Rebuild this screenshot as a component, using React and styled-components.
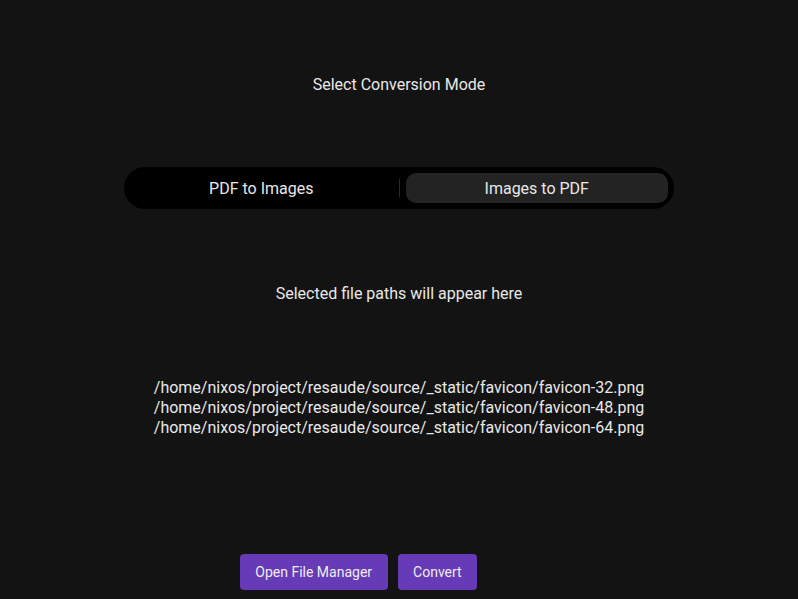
import styled, { createGlobalStyle } from 'styled-components';

const GlobalStyle = createGlobalStyle`
  html, body {
    margin: 0;
    padding: 0;
    background: #131313;
  }
  body {
    font-family: Roboto, "Noto Sans", sans-serif;
    color: #e8e8e8;
  }
`;

const Page = styled.div`
  width: 798px;
  height: 599px;
  display: flex;
  flex-direction: column;
  align-items: center;
  background: #131313;
`;

const Title = styled.div`
  margin-top: 75px;
  font-size: 16px;
  line-height: 20px;
`;

const Segmented = styled.div`
  margin-top: 72px;
  width: 550px;
  height: 42px;
  box-sizing: border-box;
  padding: 6px;
  background: #000;
  border-radius: 21px;
  display: flex;
  align-items: center;
`;

const Segment = styled.div`
  flex: 1;
  height: 30px;
  display: flex;
  align-items: center;
  justify-content: center;
  border-radius: 10px;
  font-size: 16px;
  background: ${(p) => (p.active ? '#232323' : 'transparent')};
  color: #e8e8e8;
`;

const Divider = styled.div`
  width: 1px;
  height: 18px;
  background: #2a2a2a;
  margin: 0 6px 0 6px;
`;

const Hint = styled.div`
  margin-top: 75px;
  font-size: 16px;
  line-height: 20px;
`;

const PathList = styled.div`
  margin-top: 74px;
  font-size: 16px;
  line-height: 20px;
  text-align: left;
`;

const ButtonRow = styled.div`
  margin-top: 116px;
  padding-right: 81px;
  display: flex;
  gap: 10px;
`;

const Button = styled.button`
  height: 36px;
  padding: 0 15.5px;
  border: none;
  border-radius: 4px;
  background: #673ab7;
  color: #eee;
  font-family: Roboto, sans-serif;
  font-size: 14px;
`;

const paths = [
  '/home/nixos/project/resaude/source/_static/favicon/favicon-32.png',
  '/home/nixos/project/resaude/source/_static/favicon/favicon-48.png',
  '/home/nixos/project/resaude/source/_static/favicon/favicon-64.png',
];

export default function App() {
  return (
    <>
      <GlobalStyle />
      <Page>
        <Title>Select Conversion Mode</Title>
        <Segmented>
          <Segment>PDF to Images</Segment>
          <Divider />
          <Segment active>Images to PDF</Segment>
        </Segmented>
        <Hint>Selected file paths will appear here</Hint>
        <PathList>
          {paths.map((p) => (
            <div key={p}>{p}</div>
          ))}
        </PathList>
        <ButtonRow>
          <Button>Open File Manager</Button>
          <Button>Convert</Button>
        </ButtonRow>
      </Page>
    </>
  );
}
